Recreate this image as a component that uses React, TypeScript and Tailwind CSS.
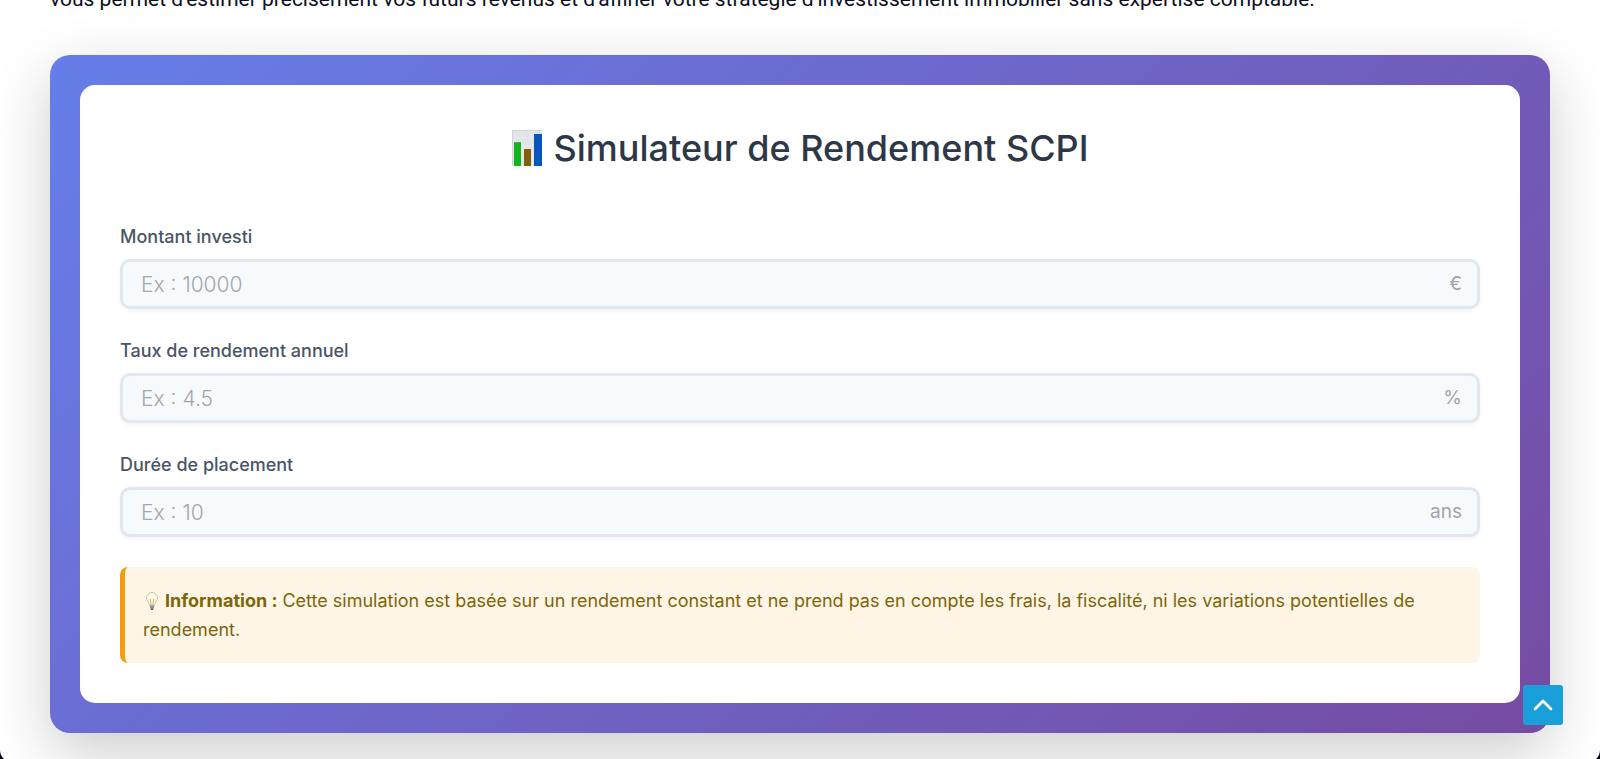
import { ChevronUp } from "lucide-react";

const fields = [
  { id: "montant", label: "Montant investi", placeholder: "Ex : 10000", unit: "€" },
  { id: "taux", label: "Taux de rendement annuel", placeholder: "Ex : 4.5", unit: "%" },
  { id: "duree", label: "Durée de placement", placeholder: "Ex : 10", unit: "ans" },
];

function ChartIcon() {
  return (
    <svg viewBox="0 0 30 36" className="h-9 w-[30px] shrink-0" aria-hidden="true">
      <rect width="30" height="36" fill="#e1e4e8" />
      <path d="M0 8h30M0 16h30M0 24h30M10 0v36M20 0v36" stroke="#e8ebee" />
      <path d="M0 .5h30M.5 0v36" fill="none" stroke="#d3d4d5" />
      <rect x="2" y="12" width="7" height="24" fill="#10b61c" />
      <rect x="2" y="12" width="7" height="1" fill="#6a9a72" />
      <rect x="12" y="19" width="7" height="17" fill="#80600b" />
      <rect x="22" y="4" width="8" height="32" fill="#0856bd" />
    </svg>
  );
}

function BulbIcon() {
  return (
    <svg viewBox="0 0 18 20" className="mr-1 inline-block h-5 w-[18px] align-[-4px]" aria-hidden="true">
      <path
        d="M9 1.500C5.700 1.500 3.500 3.800 3.500 6.800c0 2.700 2.400 4 3 7.200h5c.6-3.200 3-4.500 3-7.200C14.500 3.800 12.300 1.500 9 1.500z"
        fill="#fdf8e6"
        stroke="#cfc3a0"
        strokeWidth="1"
      />
      <path d="M7.200 8l1 5.500M10.800 8l-1 5.500" stroke="#d2ae5c" strokeWidth="0.900" fill="none" />
      <path d="M6.600 14h4.800l-.5 3.400H7.100z" fill="#a9b0b8" />
      <path d="M6.800 15.200h4.400M7 16.500h4" stroke="#737d88" strokeWidth="0.600" />
      <path d="M7.400 17.400h3.200L9.800 19H8.200z" fill="#3d4854" />
    </svg>
  );
}

export default function App() {
  return (
    <div className="h-screen overflow-hidden bg-[#05070f] font-['Inter',sans-serif]">
      <main className="rounded-b-xl bg-white px-[50px] pb-[29px]">
        {/* Intro text */}
        <div className="flex h-[55px] items-end overflow-hidden pb-10">
          <p className="font-['Roboto',sans-serif] text-[21px] leading-[32px] whitespace-nowrap text-[#0b0f1f]">
            vous permet d'estimer précisément vos futurs revenus et d'affiner votre stratégie
            d'investissement immobilier sans expertise comptable.
          </p>
        </div>

        {/* Simulator */}
        <section className="rounded-[20px] bg-[linear-gradient(135deg,#667eea_0%,#764ba2_100%)] p-[30px] shadow-[0_20px_60px_rgba(0,0,0,0.2)]">
          <form className="rounded-[15px] bg-white p-10">
            <h2 className="mb-[54px] flex items-center justify-center gap-3 text-[36px] leading-[46px] font-medium text-[#2d3748]">
              <ChartIcon />
              Simulateur de Rendement SCPI
            </h2>

            <div className="flex flex-col gap-[30px]">
              {fields.map((field) => (
                <div key={field.id} className="flex flex-col gap-[10px]">
                  <label htmlFor={field.id} className="text-[18px] leading-6 font-medium text-[#4a5568]">
                    {field.label}
                  </label>
                  <div className="relative">
                    <input
                      id={field.id}
                      type="text"
                      inputMode="decimal"
                      placeholder={field.placeholder}
                      className="block h-[50px] w-full rounded-[10px] border-[3px] border-[#e2e8f0] bg-[#f7fafc] pr-16 pl-[18px] text-[21px] font-light text-[#2d3748] shadow-[0_2px_4px_rgba(0,0,0,0.05)] placeholder:text-[#a3a6ab]"
                    />
                    <span className="pointer-events-none absolute inset-y-0 right-[18px] flex items-center text-[19px] text-[#a0a5ad]">
                      {field.unit}
                    </span>
                  </div>
                </div>
              ))}

              <p className="rounded-lg border-l-[5px] border-[#f39c12] bg-[#fef5e7] px-[18px] py-[19px] text-[18px] leading-[29px] text-[#7d6608]">
                <BulbIcon />
                <strong className="font-bold">Information :</strong> Cette simulation est basée sur un
                rendement constant et ne prend pas en compte les frais, la fiscalité, ni les variations
                potentielles de rendement.
              </p>
            </div>
          </form>
        </section>
      </main>

      <button
        type="button"
        aria-label="Haut de page"
        className="fixed right-[37px] bottom-[34px] flex size-10 items-center justify-center rounded-[3px] bg-[#1b9fdb] text-white"
      >
        <ChevronUp className="size-8" strokeWidth={2} />
      </button>
    </div>
  );
}
